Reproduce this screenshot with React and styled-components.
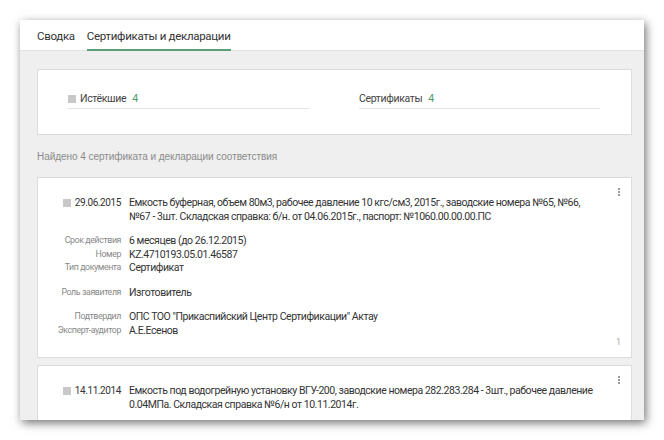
import React from "react";
import styled, { createGlobalStyle } from "styled-components";

const Global = createGlobalStyle`
  html, body { margin: 0; padding: 0; background: #ffffff; }
  body { font-family: Roboto, "Noto Sans", sans-serif; color: #333; }
`;

const Page = styled.div`
  padding: 20px;
`;

const Window = styled.div`
  width: 624px;
  height: 400px;
  background: #efefef;
  overflow: hidden;
  box-shadow: 2px 3px 9px rgba(0, 0, 0, 0.55);
`;

const TabBar = styled.div`
  display: flex;
  gap: 12px;
  height: 30px;
  padding-left: 17px;
  background: #fff;
  border-bottom: 1px solid #e2e2e2;
`;

const Tab = styled.div`
  font-size: 11.5px;
  letter-spacing: -0.3px;
  line-height: 30px;
  color: #333;
  box-sizing: border-box;
  border-bottom: 2px solid ${(p) => (p.$active ? "#5a9e78" : "transparent")};
  height: 31px;
  padding-top: 1px;
`;

const Content = styled.div`
  padding: 18px 12px 0 17px;
  display: flex;
  flex-direction: column;
`;

const FilterCard = styled.div`
  height: 66px;
  box-sizing: border-box;
  background: #fff;
  border: 1px solid #dcdcdc;
  display: grid;
  grid-template-columns: 241px 241px;
  column-gap: 50px;
  padding: 20px 31px 0 30px;
`;

const FilterItem = styled.div`
  display: flex;
  align-items: center;
  height: 17px;
  padding-bottom: 1px;
  border-bottom: 1px solid #e4e4e4;
  font-size: 10.5px;
  letter-spacing: -0.35px;
  color: #444;
`;

const Square = styled.span`
  width: 8px;
  height: 8px;
  background: #c8c8c8;
  margin-right: 4px;
  flex: none;
`;

const Count = styled.span`
  color: #4e9a6e;
  margin-left: 6px;
`;

const Found = styled.div`
  font-family: "Liberation Sans", Arial, sans-serif;
  font-size: 10px;
  letter-spacing: -0.05px;
  color: #8a8a8a;
  margin: 15px 0 13px;
  line-height: 14px;
`;

const Card = styled.div`
  position: relative;
  background: #fff;
  border: 1px solid #dcdcdc;
  margin-bottom: 7px;
  padding: 18px 0 20px;
  display: grid;
  grid-template-columns: 83px 466px;
  column-gap: 8px;
  align-items: start;
`;

const DateCell = styled.div`
  display: flex;
  align-items: center;
  justify-content: flex-end;
  font-size: 10px;
  letter-spacing: -0.4px;
  line-height: 14px;
  color: #333;
`;

const Desc = styled.div`
  font-size: 10.5px;
  letter-spacing: -0.45px;
  line-height: 13.5px;
  color: #333;
`;

const Label = styled.div`
  font-size: 8.8px;
  letter-spacing: -0.4px;
  line-height: 13.5px;
  color: #888;
  text-align: right;
  white-space: nowrap;
  margin-top: ${(p) => (p.$gap ? "11px" : "0")};
`;

const Value = styled.div`
  font-size: 10.5px;
  letter-spacing: -0.45px;
  line-height: 13.5px;
  color: #333;
  margin-top: ${(p) => (p.$gap ? "11px" : "0")};
`;

const Kebab = styled.div`
  position: absolute;
  top: 10px;
  right: 11px;
  display: flex;
  flex-direction: column;
  gap: 1px;
  span {
    width: 2px;
    height: 2px;
    background: #9a9a9a;
  }
`;

const PageNum = styled.div`
  position: absolute;
  right: 10px;
  bottom: 10px;
  font-size: 9px;
  color: #aaaaaa;
`;

const Spacer = styled.div`
  grid-column: 1 / -1;
  height: 11px;
`;

function Dots() {
  return (
    <Kebab>
      <span />
      <span />
      <span />
    </Kebab>
  );
}

function Field({ label, value, gap }) {
  return (
    <>
      <Label $gap={gap}>{label}</Label>
      <Value $gap={gap}>{value}</Value>
    </>
  );
}

export default function App() {
  return (
    <>
      <Global />
      <Page>
        <Window>
          <TabBar>
            <Tab>Сводка</Tab>
            <Tab $active>Сертификаты и декларации</Tab>
          </TabBar>
          <Content>
            <FilterCard>
              <FilterItem>
                <Square />
                Истёкшие<Count>4</Count>
              </FilterItem>
              <FilterItem>
                Сертификаты<Count>4</Count>
              </FilterItem>
            </FilterCard>
            <Found>Найдено 4 сертификата и декларации соответствия</Found>
            <Card>
              <Dots />
              <DateCell>
                <Square />
                29.06.2015
              </DateCell>
              <Desc>
                Емкость буферная, объем 80м3, рабочее давление 10 кгс/см3, 2015г., заводские номера №65, №66,
                №67 - 3шт. Складская справка: б/н. от 04.06.2015г., паспорт: №1060.00.00.00.ПС
              </Desc>
              <Spacer />
              <Field label="Срок действия" value="6 месяцев (до 26.12.2015)" />
              <Field label="Номер" value="KZ.4710193.05.01.46587" />
              <Field label="Тип документа" value="Сертификат" />
              <Field gap label="Роль заявителя" value="Изготовитель" />
              <Field gap label="Подтвердил" value='ОПС ТОО "Прикаспийский Центр Сертификации" Актау' />
              <Field label="Эксперт-аудитор" value="А.Е.Есенов" />
              <PageNum>1</PageNum>
            </Card>
            <Card>
              <Dots />
              <DateCell>
                <Square />
                14.11.2014
              </DateCell>
              <Desc>
                Емкость под водогрейную установку ВГУ-200, заводские номера 282.283.284 - 3шт., рабочее давление
                0.04МПа. Складская справка №6/н от 10.11.2014г.
              </Desc>
            </Card>
          </Content>
        </Window>
      </Page>
    </>
  );
}
